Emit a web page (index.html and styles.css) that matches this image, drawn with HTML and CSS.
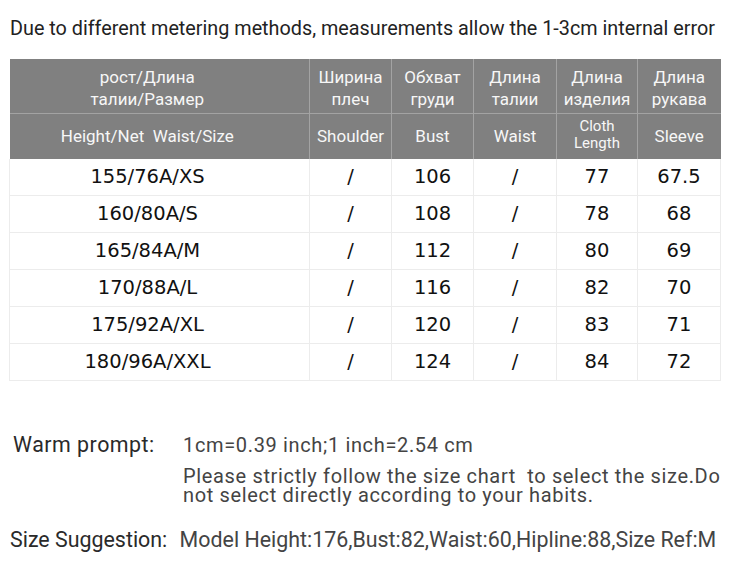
FILE: index.html
```html
<!DOCTYPE html>
<html>
<head>
<meta charset="utf-8">
<link rel="stylesheet" href="styles.css">
</head>
<body>
<div class="page">
  <p class="note">Due to different metering methods, measurements allow the 1-3cm internal error</p>
  <table class="chart">
    <colgroup>
      <col class="c1"><col class="c2"><col class="c3"><col class="c4"><col class="c5"><col class="c6">
    </colgroup>
    <thead>
      <tr class="ru">
        <th class="first">рост/Длина<br>талии/Размер</th>
        <th>Ширина<br>плеч</th>
        <th>Обхват<br>груди</th>
        <th>Длина<br>талии</th>
        <th>Длина<br>изделия</th>
        <th>Длина<br>рукава</th>
      </tr>
      <tr class="en">
        <th class="first">Height/Net&nbsp; Waist/Size</th>
        <th>Shoulder</th>
        <th>Bust</th>
        <th>Waist</th>
        <th class="small">Cloth<br>Length</th>
        <th>Sleeve</th>
      </tr>
    </thead>
    <tbody>
      <tr><td class="first">155/76A/XS</td><td>/</td><td>106</td><td>/</td><td>77</td><td>67.5</td></tr>
      <tr><td class="first">160/80A/S</td><td>/</td><td>108</td><td>/</td><td>78</td><td>68</td></tr>
      <tr><td class="first">165/84A/M</td><td>/</td><td>112</td><td>/</td><td>80</td><td>69</td></tr>
      <tr><td class="first">170/88A/L</td><td>/</td><td>116</td><td>/</td><td>82</td><td>70</td></tr>
      <tr><td class="first">175/92A/XL</td><td>/</td><td>120</td><td>/</td><td>83</td><td>71</td></tr>
      <tr><td class="first">180/96A/XXL</td><td>/</td><td>124</td><td>/</td><td>84</td><td>72</td></tr>
    </tbody>
  </table>

  <div class="prompt">
    <div class="label">Warm prompt:</div>
    <div class="texts">
      <p class="conv">1cm=0.39 inch;1 inch=2.54 cm</p>
      <p class="advice">Please strictly follow the size chart&nbsp; to select the size.Do not select directly according to your habits.</p>
    </div>
  </div>

  <div class="suggest">
    <span class="slabel">Size Suggestion:</span>
    <span class="stext">Model Height:176,Bust:82,Waist:60,Hipline:88,Size Ref:M</span>
  </div>
</div>
</body>
</html>
```

FILE: styles.css
```css
html, body {
  margin: 0;
  padding: 0;
  background: #ffffff;
}

.page {
  width: 730px;
  height: 571px;
  overflow: hidden;
  font-family: Roboto, "Noto Sans", sans-serif;
}

.note {
  margin: 0;
  padding: 18px 0 0 10px;
  height: 42px;
  box-sizing: border-box;
  font-size: 19.8px;
  line-height: 22px;
  color: #222;
  white-space: nowrap;
}

.chart {
  margin: 17px 0 0 9px;
  border-collapse: collapse;
  table-layout: fixed;
  width: 711px;
}

.c1 { width: 300px; }
.c2 { width: 82px; }
.c3 { width: 82px; }
.c4 { width: 83px; }
.c5 { width: 81px; }
.c6 { width: 83px; }

.chart th {
  background: #808080;
  color: #f7f7f7;
  font-weight: normal;
  font-size: 17px;
  line-height: 22px;
  padding: 0;
  text-align: center;
  border-left: 1px solid #a3a3a3;
}

.chart th:first-child { border-left: none; }

.chart tr.ru th {
  height: 54px;
  padding-top: 5px;
  box-sizing: border-box;
  border-bottom: 1px solid #a3a3a3;
}

.chart tr.en th {
  height: 43px;
}

.chart th.small {
  font-size: 15px;
  line-height: 17px;
  padding-bottom: 2px;
}

.chart .first {
  padding-right: 24px;
}

.chart td {
  height: 36px;
  padding: 0;
  text-align: center;
  font-family: "DejaVu Sans", Verdana, sans-serif;
  font-size: 19.5px;
  color: #111;
  border: 1px solid #ececec;
  border-top: none;
}

.prompt {
  display: flex;
  margin-top: 52px;
}

.label {
  width: 170px;
  padding-left: 13px;
  font-size: 21.4px;
  letter-spacing: 0.5px;
  line-height: 24px;
  color: #2a2a2a;
  white-space: nowrap;
}

.texts {
  width: 547px;
}

.texts p {
  margin: 0;
  color: #444;
  font-size: 20px;
  letter-spacing: 0.65px;
}

.conv {
  line-height: 24px;
}

.advice {
  margin-top: 10px !important;
  line-height: 19px;
}

.suggest {
  margin-top: 23px;
  padding-left: 10px;
  font-size: 21.4px;
  line-height: 24px;
  color: #2a2a2a;
  white-space: nowrap;
}

.slabel {
  margin-right: 7px;
}

.stext {
  color: #444;
}
```
